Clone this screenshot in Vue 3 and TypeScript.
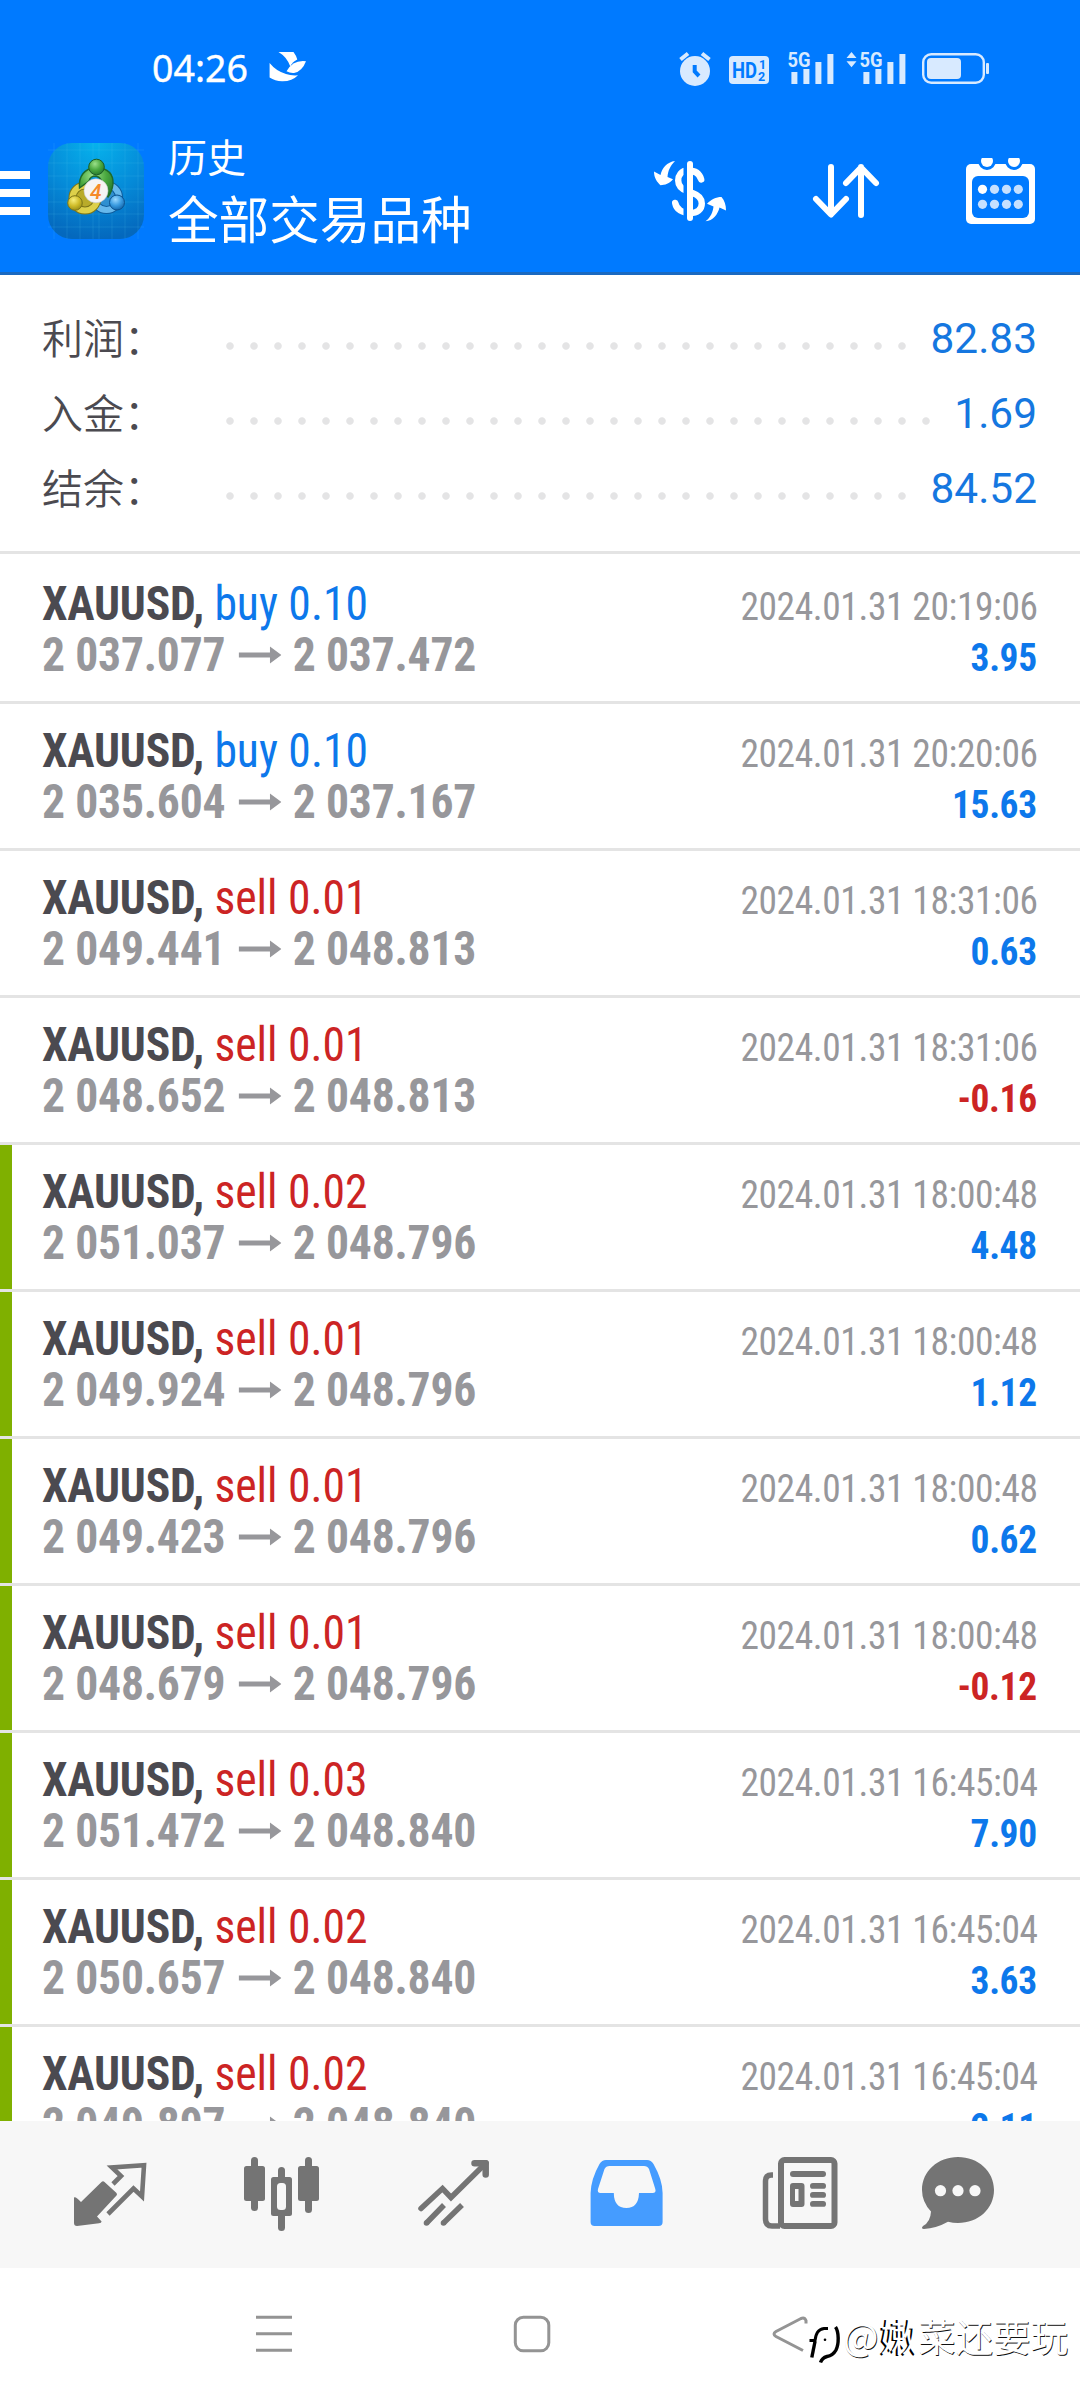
<script setup lang="ts">
interface SummaryLine {
  label: string
  value: string
}

interface Deal {
  side: 'buy' | 'sell'
  volume: string
  open: string
  close: string
  time: string
  profit: string
  marked: boolean
}

const summary: SummaryLine[] = [
  { label: '利润：', value: '82.83' },
  { label: '入金：', value: '1.69' },
  { label: '结余：', value: '84.52' },
]

const deal = (
  side: Deal['side'],
  volume: string,
  open: string,
  close: string,
  time: string,
  profit: string,
  marked = false,
): Deal => ({ side, volume, open, close, time: `2024.01.31 ${time}`, profit, marked })

const deals: Deal[] = [
  deal('buy', '0.10', '2 037.077', '2 037.472', '20:19:06', '3.95'),
  deal('buy', '0.10', '2 035.604', '2 037.167', '20:20:06', '15.63'),
  deal('sell', '0.01', '2 049.441', '2 048.813', '18:31:06', '0.63'),
  deal('sell', '0.01', '2 048.652', '2 048.813', '18:31:06', '-0.16'),
  deal('sell', '0.02', '2 051.037', '2 048.796', '18:00:48', '4.48', true),
  deal('sell', '0.01', '2 049.924', '2 048.796', '18:00:48', '1.12', true),
  deal('sell', '0.01', '2 049.423', '2 048.796', '18:00:48', '0.62', true),
  deal('sell', '0.01', '2 048.679', '2 048.796', '18:00:48', '-0.12', true),
  deal('sell', '0.03', '2 051.472', '2 048.840', '16:45:04', '7.90', true),
  deal('sell', '0.02', '2 050.657', '2 048.840', '16:45:04', '3.63', true),
  deal('sell', '0.02', '2 049.897', '2 048.840', '16:45:04', '2.11', true),
]

const calendarDots = [189.3, 204.3].flatMap((y) => [982.5, 994.5, 1006.5, 1018.3].map((x) => ({ x, y })))
</script>

<template>
  <div class="screen">
    <header class="header">
      <div class="status">
        <span class="clock">04:26</span>
        <svg class="bird" width="40" height="34" viewBox="268 52 40 34" fill="#fff">
          <path d="M278.500 54H293.500Q296.500 58 297.300 61.500Q292 64 290.300 68.500Q287 59 278.500 54Z" />
          <path d="M306 63.200Q302 73.500 294 75Q290 75.300 286.500 73.300Q293 61.500 306 63.200Z" />
          <path d="M269.600 65Q276 73 286 76Q291 77.800 298 77.300Q292 83.500 282 83.300Q275 83 269.600 79.500Z" />
        </svg>
        <svg class="system" width="314" height="42" viewBox="678 46 314 42" fill="#d8eaff">
          <circle cx="695" cy="71" r="15" />
          <path d="M680.500 59.500L688 53.500M709.500 59.500L702 53.500" stroke="#d8eaff" stroke-width="4" />
          <path d="M694.700 65V71.500L699 76" fill="none" stroke="#007aff" stroke-width="4" />
          <rect x="729" y="56" width="40" height="28" rx="4" />
          <text x="732" y="77.800" class="mini" font-size="21.500" textLength="25" lengthAdjust="spacingAndGlyphs" fill="#007aff">HD</text>
          <text x="759" y="69.300" class="mini" font-size="12.500" fill="#007aff">1</text>
          <text x="758" y="81" class="mini" font-size="12.500" fill="#007aff">2</text>
          <g v-for="dx in [0, 72]" :key="dx" :transform="`translate(${dx} 0)`">
            <text x="787.500" y="66.700" class="mini" font-size="20" textLength="23" lengthAdjust="spacingAndGlyphs">5G</text>
            <path d="M791.400 72h6v12h-6zM803.400 69h6v15h-6zM815.400 62h6v22h-6zM827.400 54h6v30h-6z" />
          </g>
          <path d="M846.500 58L851.500 52L856.500 58ZM846.500 61.300H856.500L851.500 67.300Z" />
          <rect x="923.200" y="54.200" width="60.600" height="28.600" rx="8" fill="none" stroke="#d8eaff" stroke-width="2.400" />
          <rect x="927" y="58" width="34" height="21" rx="4" />
          <rect x="986" y="63" width="3" height="11" rx="1" />
        </svg>
      </div>
      <div class="appbar">
        <svg class="burger" width="30" height="44" viewBox="0 171 30 44" fill="#fff">
          <path d="M0 171h30v8H0zM0 189h30v8H0zM0 207h30v8H0z" />
        </svg>
        <svg class="logo" width="96" height="96" viewBox="48 143 96 96">
          <defs>
            <radialGradient id="tile" cx=".5" cy="0" r="1">
              <stop offset="0" stop-color="#06b2ec" />
              <stop offset=".55" stop-color="#058ad8" />
              <stop offset="1" stop-color="#0468bd" />
            </radialGradient>
            <radialGradient id="green" cx=".4" cy=".3" r=".8"><stop offset="0" stop-color="#9be08a" /><stop offset=".5" stop-color="#4aa83f" /><stop offset="1" stop-color="#1f6f2b" /></radialGradient>
            <radialGradient id="yellow" cx=".4" cy=".3" r=".8"><stop offset="0" stop-color="#f7ee7c" /><stop offset=".5" stop-color="#d0bd2a" /><stop offset="1" stop-color="#8c8414" /></radialGradient>
            <radialGradient id="blue" cx=".4" cy=".3" r=".8"><stop offset="0" stop-color="#9ad8ff" /><stop offset=".5" stop-color="#3a9be0" /><stop offset="1" stop-color="#0b5a9e" /></radialGradient>
          </defs>
          <rect x="48" y="143" width="96" height="96" rx="24" fill="url(#tile)" />
          <path d="M54 143V239M67 143V239M80 143V239M93 143V239M99 143V239M112 143V239M125 143V239M138 143V239M48 150H144M48 163H144M48 176H144M48 189H144M48 202H144M48 214H144M48 227H144" stroke="#5fc4f5" stroke-opacity=".16" stroke-width="1" />
          <circle cx="106.500" cy="197.500" r="12.500" fill="#2f8fd0" stroke="#0f5c9c" stroke-width="8" />
          <circle cx="106.500" cy="197.500" r="12.500" fill="none" stroke="#66b8ec" stroke-width="6" />
          <circle cx="85" cy="198" r="12.500" fill="#b9ab2a" stroke="#7d7518" stroke-width="8" />
          <circle cx="85" cy="198" r="12.500" fill="none" stroke="#ddd04a" stroke-width="6" />
          <path d="M79.500 188Q78 170 96 167Q114 169 113 184Q112 192 108 197L101 190Q104 178 96 176Q90 176 89 181Z" fill="url(#green)" stroke="#1f6a2b" stroke-width="1.400" />
          <circle cx="96.500" cy="167" r="7.800" fill="url(#green)" stroke="#1b5c26" stroke-width="1" />
          <circle cx="75" cy="203" r="7.300" fill="url(#yellow)" stroke="#7d7518" stroke-width="1" />
          <circle cx="117" cy="202.500" r="7.500" fill="url(#blue)" stroke="#0b5290" stroke-width="1" />
          <circle cx="96" cy="190.800" r="12" fill="#f6f4f4" stroke="#c7c9cc" stroke-width=".6" />
          <text x="90" y="198.500" class="four" font-size="21" fill="#f58a2a">4</text>
        </svg>
        <div class="titles">
          <div class="sub">历史</div>
          <div class="main">全部交易品种</div>
        </div>
        <svg class="actions" width="386" height="68" viewBox="652 158 386 68" fill="none" stroke-linecap="round" stroke-linejoin="round">
          <path d="M701.200 179.500C699.500 173 694 170.500 688 170.500C681 170.500 678.200 176 678.200 180.500C678.200 186 682 189.500 688 191.500L693 193.300C699.500 195.500 701.800 199.500 701.800 203.500C701.800 209.500 697.500 213 690 213C682 213 676.500 209.500 675.200 203" stroke="#fff" stroke-width="6.400" />
          <path d="M685.500 163V220" stroke="#007aff" stroke-width="4" />
          <path d="M690 164V218" stroke="#fff" stroke-width="6" />
          <path d="M675 161C667 162 662 168 660.500 175L654 171.500C654 178 657 182 660.500 185.200C665 185.200 669.500 183.500 673 179.300L667.500 177C668 171 670 166 675 161Z" fill="#fff" />
          <path d="M705.500 221.200C711 217.500 713 211 713.500 206.500L707 203.700C711 199.500 716 197 721.500 197C724.500 200.500 726 205 726 210.500L719.500 207.500C718 214 713 221 705.500 221.200Z" fill="#fff" />
          <path d="M831 167V214M816 199L831 214.500L846 199" stroke="#fff" stroke-width="6" />
          <path d="M861 167V215M846 183L861 167.500L876 183" stroke="#fff" stroke-width="6" />
          <rect x="966" y="164" width="69" height="60" rx="5" fill="#fff" />
          <rect x="972" y="176" width="57" height="42" rx="6" fill="#007aff" />
          <path d="M987 160V161M1014 160V161" stroke="#007aff" stroke-width="18" />
          <circle cx="987" cy="161" r="6" fill="#fff" />
          <circle cx="1014" cy="161" r="6" fill="#fff" />
          <circle v-for="(dot, i) in calendarDots" :key="i" :cx="dot.x" :cy="dot.y" r="4.600" :fill="i === 0 ? '#fff' : '#c6e0ff'" />
        </svg>
      </div>
    </header>

    <section class="summary">
      <div v-for="line in summary" :key="line.label" class="line">
        <span class="label">{{ line.label }}</span>
        <span class="leader"></span>
        <span class="amount">{{ line.value }}</span>
      </div>
    </section>

    <main class="deals">
      <article v-for="(item, i) in deals" :key="i" class="deal" :class="{ marked: item.marked }">
        <div class="left">
          <div class="name"><b>XAUUSD,</b> <span :class="item.side">{{ item.side }} {{ item.volume }}</span></div>
          <div class="prices">
            <span class="price">{{ item.open }}</span>
            <svg class="arrow" width="45" height="18" viewBox="0 0 43 18" preserveAspectRatio="none" fill="#97979b"><path d="M0 6.500h31.500V.500L43 9 31.500 17.500v-6H0z" /></svg>
            <span class="price">{{ item.close }}</span>
          </div>
        </div>
        <div class="right">
          <div class="time">{{ item.time }}</div>
          <div class="profit" :class="{ loss: item.profit.startsWith('-') }">{{ item.profit }}</div>
        </div>
      </article>
    </main>

    <nav class="tabs">
      <svg width="1080" height="147" viewBox="0 2121 1080 147" fill="#747474">
        <path d="M101.500 2182Q103 2180.500 104.500 2182L116.500 2193Q117.500 2194.500 116.500 2195.500L97 2216.500L101.600 2221.500Q101.500 2223 99 2223.300L77 2226Q74 2226 74 2223V2197.500Q75.500 2196 81 2202Z" />
        <path d="M113 2184L121 2176L112 2167.500L144 2165.300L142 2196.500L133.500 2188.500L108 2214" fill="none" stroke="#747474" stroke-width="4.600" />
        <rect x="244" y="2166" width="21" height="35" rx="2.500" /><rect x="251" y="2157" width="7" height="54" rx="3.500" />
        <rect x="271" y="2177" width="21" height="39" rx="2.500" /><rect x="278" y="2167" width="7" height="64" rx="3.500" />
        <rect x="277" y="2183" width="9" height="27" rx="3.500" fill="#f7f7f7" />
        <rect x="298" y="2166" width="21" height="35" rx="2.500" /><rect x="305" y="2157" width="7" height="56" rx="3.500" />
        <g fill="none" stroke="#747474" stroke-width="5.500">
          <path d="M421 2208.500L442.500 2188.500L451 2197.500L486 2163" stroke-linecap="round" />
          <path d="M474.500 2163.300H485.700V2174.500" stroke-width="6.500" stroke-linecap="round" stroke-linejoin="round" />
          <path d="M426.500 2223L444 2205M443.500 2223L462 2205" />
        </g>
        <circle cx="426.500" cy="2223" r="2.800" /><circle cx="443.500" cy="2223" r="2.800" />
        <path fill="#459cff" fill-rule="evenodd" d="M606 2160H647Q651 2160 653.500 2164Q662.600 2180 662.600 2193V2222Q662.600 2226 658.600 2226H594.600Q590.600 2226 590.600 2222V2193Q591 2179 599.500 2164Q602 2160 606 2160ZM609.500 2166Q606 2166 604.500 2169L598 2189Q597 2193 600.500 2193H613.800Q614 2208 626.400 2208Q638.500 2208 639 2193H652.500Q656.500 2193 655.300 2189L649 2169Q647.500 2166 644 2166Z" />
        <rect x="781" y="2160" width="53.500" height="66" rx="3.500" fill="none" stroke="#747474" stroke-width="6" />
        <path d="M773 2175H771.500Q765.500 2175 765.500 2181V2219Q765.500 2226 772 2226H780" fill="none" stroke="#747474" stroke-width="5.500" />
        <rect x="790" y="2171" width="36" height="6" rx="3" />
        <path fill-rule="evenodd" d="M793 2183h8.500q3 0 3 3v18q0 3-3 3H793q-3 0-3-3v-18q0-3 3-3zM795 2189v12h3.500v-12z" />
        <rect x="810" y="2183" width="16" height="5.800" rx="2.900" /><rect x="810" y="2192" width="16" height="5.800" rx="2.900" /><rect x="810" y="2201" width="16" height="5.800" rx="2.900" />
        <path d="M958 2157C978 2157 994 2171 994 2190S978 2223 958 2223Q953 2223 948 2221.800Q936 2228.500 924 2229Q920.500 2228.500 923 2226Q930.500 2222 931 2211.500Q922 2202 922 2190C922 2171 938 2157 958 2157Z" />
        <g fill="#f7f7f7"><circle cx="940.500" cy="2190.700" r="5.600" /><circle cx="958" cy="2190.700" r="5.600" /><circle cx="975" cy="2190.700" r="5.600" /></g>
      </svg>
    </nav>

    <footer class="system-nav">
      <svg width="590" height="44" viewBox="250 2312 590 44" fill="none" stroke="#949494" stroke-width="3">
        <path d="M256 2317.300H292M256 2333.800H292M256 2350.300H292" />
        <rect x="515.300" y="2317.300" width="33.500" height="33.500" rx="8" />
        <path d="M806 2323.500V2320.500Q804.500 2317 801 2318.500L776 2331.500Q772 2334 776 2336.500L803 2350.500" />
      </svg>
      <div class="watermark">
        <svg width="34" height="44" viewBox="806 2323 34 44" fill="none" stroke="#000">
          <path d="M828 2328.500H824C818 2329.500 816 2333 815 2340.500H809.500" stroke-width="3" />
          <path d="M815 2341.500L811.800 2357.500" stroke-width="3.400" />
          <path d="M835.500 2327C839 2332 839 2344 836 2350Q833 2355.500 827 2356.500Q822 2358 820.500 2362.500" stroke-width="3.400" />
          <circle cx="825" cy="2339.700" r="1.300" fill="#000" stroke="none" />
        </svg>
        <span class="handle">@<span class="heavy">嫩</span>菜还要玩</span>
      </div>
    </footer>
  </div>
</template>

<style>
body {
  margin: 0;
  background: #fff;
}
</style>

<style scoped>
.screen {
  width: 1080px;
  height: 2400px;
  overflow: hidden;
  display: flex;
  flex-direction: column;
  background: #fff;
  font-family: Roboto, "Noto Sans CJK SC", sans-serif;
}

svg {
  display: block;
  flex: none;
}

.mini {
  font-family: Roboto, sans-serif;
  font-weight: 700;
}

.four {
  font-family: Roboto, sans-serif;
  font-style: italic;
  font-weight: 500;
}

.header {
  height: 272px;
  flex: none;
  background: #007aff;
  border-bottom: 3px solid #1a69c0;
  color: #fff;
}

.status {
  display: flex;
  height: 88px;
  padding-top: 46px;
  box-sizing: border-box;
}

.clock {
  width: 116px;
  margin: 3px 0 0 152px;
  font: 400 37.5px/38px "Noto Sans", sans-serif;
  -webkit-text-stroke: 0.4px #fff;
}

.bird {
  margin-top: 4px;
}

.system {
  margin-left: 370px;
}

.appbar {
  display: flex;
  align-items: flex-start;
}

.burger {
  margin-top: 83px;
}

.logo {
  margin: 55px 0 0 18px;
}

.titles {
  width: 484px;
  margin: 39px 0 0 24px;
  white-space: nowrap;
  font-family: "Noto Sans CJK SC", sans-serif;
}

.sub {
  font-size: 39px;
  line-height: 56px;
}

.main {
  font-size: 50.6px;
  line-height: 68px;
}

.actions {
  margin-top: 70px;
}

.summary {
  height: 276px;
  flex: none;
  padding: 26px 43px 0;
  box-sizing: border-box;
}

.line {
  display: flex;
  align-items: center;
  height: 75px;
}

.label {
  width: 184px;
  margin: -5px 0 0 -1px;
  color: #4b4a50;
  font: 350 41px/75px "Noto Sans CJK SC", sans-serif;
}

.leader {
  flex: 1;
  height: 8px;
  margin: 15px 20px 0 0;
  background: radial-gradient(circle at 4px 4px, #e4e4e5 3.3px, transparent 4.200px) 0 0 / 24px 8px repeat-x;
}

.amount {
  color: #1577e0;
  font-size: 42.4px;
}

.deals {
  height: 1570px;
  flex: none;
  padding-top: 3px;
  box-sizing: border-box;
  border-top: 3px solid #e4e4e4;
  overflow: hidden;
  font-stretch: 75%;
}

.deal {
  display: flex;
  justify-content: space-between;
  align-items: baseline;
  height: 147px;
  padding: 21px 42px 0;
  box-sizing: border-box;
  border-bottom: 3px solid #e4e4e4;
}

.marked {
  background: linear-gradient(#7fb000, #7fb000) 0 0 / 12px 144px no-repeat;
}

.left,
.right {
  white-space: nowrap;
}

.left {
  transform: scaleX(0.95);
  transform-origin: left;
}

.name,
.price {
  font-size: 48px;
  line-height: 51px;
}

.name b {
  color: #4b4a50;
  font-weight: 700;
  letter-spacing: -0.2px;
}

.buy {
  color: #0d78eb;
}

.sell {
  color: #cc2424;
}

.prices {
  display: flex;
  align-items: center;
  color: #97979b;
  font-weight: 700;
  letter-spacing: -0.2px;
}

.arrow {
  margin: 0 12px 0 14px;
}

.right {
  text-align: right;
  font-size: 39px;
  line-height: 51px;
  letter-spacing: -0.4px;
  transform: scaleX(0.96);
  transform-origin: right;
}

.time {
  color: #97979b;
}

.profit {
  padding-right: 1px;
  color: #0d78eb;
  font-weight: 700;
}

.loss {
  color: #cc2424;
}

.tabs {
  height: 147px;
  flex: none;
  background: #f7f7f7;
}

.system-nav {
  position: relative;
  height: 132px;
  padding: 44px 0 0 250px;
  box-sizing: border-box;
}

.watermark {
  position: absolute;
  left: 806px;
  top: 55px;
  display: flex;
}

.handle {
  margin: -12px 0 0 3px;
  font: 400 37.500px/48px "Noto Sans CJK SC", sans-serif;
  color: #fff;
  text-shadow: 0.800px 0.800px 0.600px #111;
}

.heavy {
  margin-left: 2px;
  text-shadow: -2px 0.500px 0 #000;
}
</style>
